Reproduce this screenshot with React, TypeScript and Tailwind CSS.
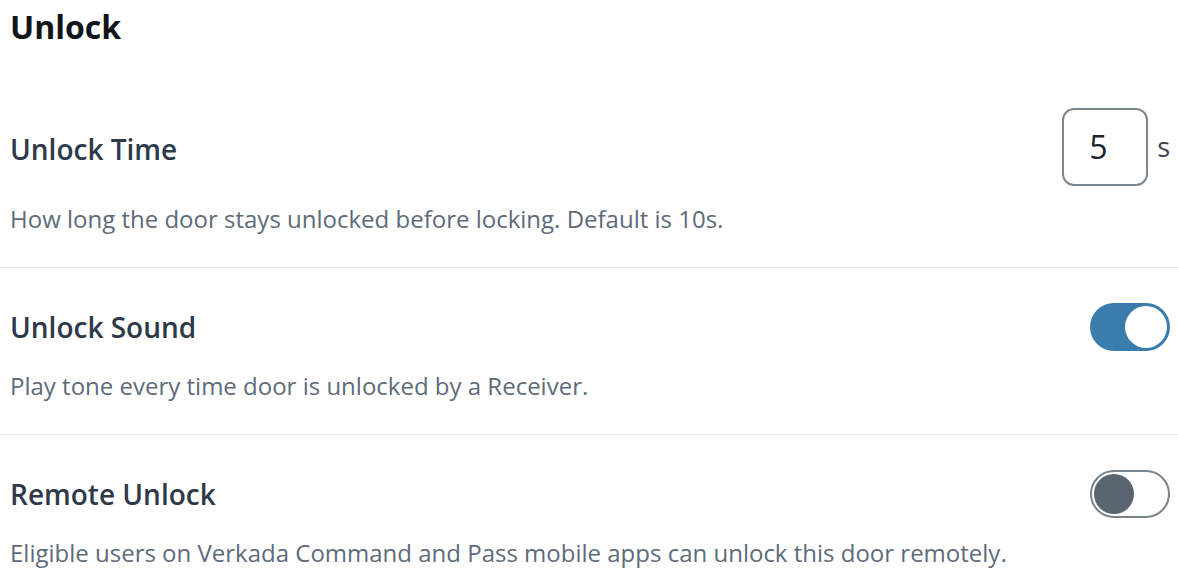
import { useState } from 'react'

function Toggle({ on }: { on: boolean }) {
  return (
    <button
      className={
        on
          ? 'w-[80px] h-[48px] rounded-full bg-[#3a7cac] flex items-center justify-end p-[3px]'
          : 'w-[80px] h-[48px] rounded-full bg-white border-2 border-[#7b838c] flex items-center justify-start p-[2px]'
      }
    >
      <span
        className={
          on
            ? 'w-[42px] h-[42px] rounded-full bg-white'
            : 'w-[40px] h-[40px] rounded-full bg-[#5a6571]'
        }
      />
    </button>
  )
}

export default function App() {
  const [seconds] = useState('5')

  return (
    <div className="w-[1178px] h-[588px] bg-white overflow-hidden" style={{ fontFamily: '"Open Sans", sans-serif' }}>
      <h1 className="px-[10px] pt-[7px] text-[32px] leading-[40px] font-bold text-[#111418]">Unlock</h1>

      <section className="pl-[10px] pr-[6px] pt-[61px] pb-[32px] border-b border-[#e3e6ea]">
        <div className="flex items-center justify-between h-[78px]">
          <span className="text-[28px] leading-[36px] font-semibold text-[#2e3a49] mt-[4px]">Unlock Time</span>
          <div className="flex items-center gap-[9px]">
            <div className="w-[86px] h-[78px] rounded-[12px] border-2 border-[#7d858e] flex items-center pl-[25px] text-[32px] text-[#1d232b]">
              {seconds}
            </div>
            <span className="text-[27px] text-[#3a4450] pr-[2px]">s</span>
          </div>
        </div>
        <p className="mt-[17px] text-[24px] leading-[32px] text-[#5e6b79]">
          How long the door stays unlocked before locking. Default is 10s.
        </p>
      </section>

      <section className="pl-[10px] pr-[8px] pt-[35px] pb-[32px] border-b border-[#e3e6ea]">
        <div className="flex items-center justify-between h-[48px]">
          <span className="text-[28px] leading-[36px] font-semibold text-[#2e3a49]">Unlock Sound</span>
          <Toggle on />
        </div>
        <p className="mt-[19px] text-[24px] leading-[32px] text-[#5e6b79]">
          Play tone every time door is unlocked by a Receiver.
        </p>
      </section>

      <section className="pl-[10px] pr-[8px] pt-[35px] pb-[32px]">
        <div className="flex items-center justify-between h-[48px]">
          <span className="text-[28px] leading-[36px] font-semibold text-[#2e3a49]">Remote Unlock</span>
          <Toggle on={false} />
        </div>
        <p className="mt-[19px] text-[24px] leading-[32px] text-[#5e6b79]">
          Eligible users on Verkada Command and Pass mobile apps can unlock this door remotely.
        </p>
      </section>
    </div>
  )
}
